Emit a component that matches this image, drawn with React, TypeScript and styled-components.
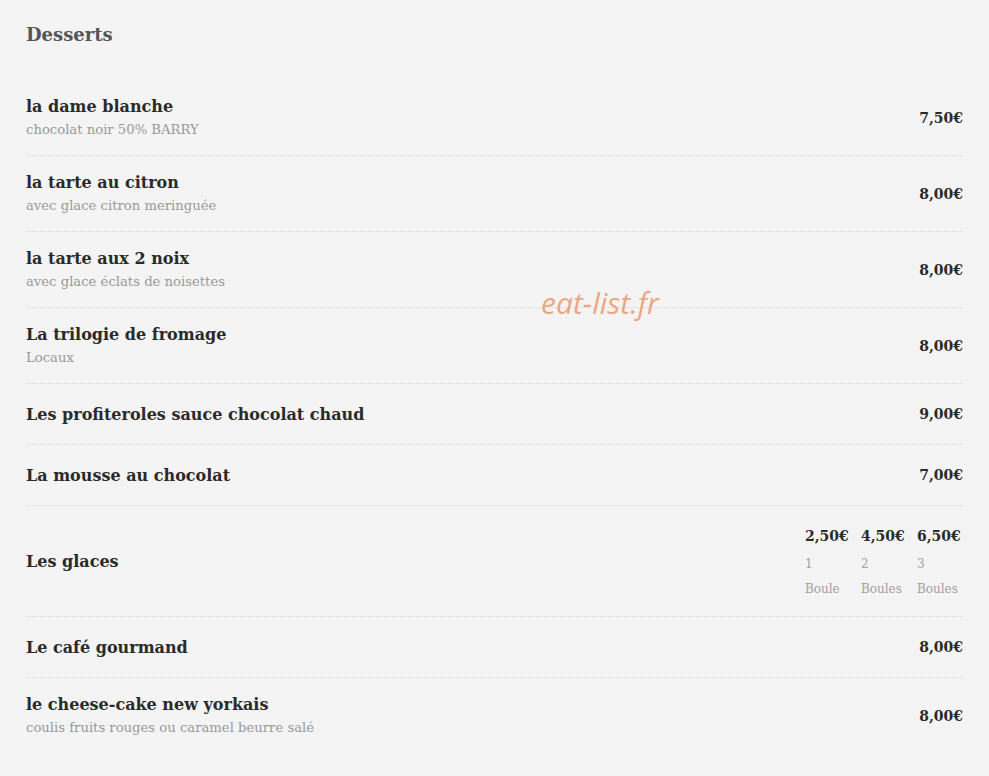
import React from "react";
import styled, { createGlobalStyle } from "styled-components";

interface Item {
  name: string;
  desc?: string;
  price?: string;
  prices?: { price: string; qty: string; label: string }[];
}

const items: Item[] = [
  { name: "la dame blanche", desc: "chocolat noir 50% BARRY", price: "7,50€" },
  { name: "la tarte au citron", desc: "avec glace citron meringuée", price: "8,00€" },
  { name: "la tarte aux 2 noix", desc: "avec glace éclats de noisettes", price: "8,00€" },
  { name: "La trilogie de fromage", desc: "Locaux", price: "8,00€" },
  { name: "Les profiteroles sauce chocolat chaud", price: "9,00€" },
  { name: "La mousse au chocolat", price: "7,00€" },
  {
    name: "Les glaces",
    prices: [
      { price: "2,50€", qty: "1", label: "Boule" },
      { price: "4,50€", qty: "2", label: "Boules" },
      { price: "6,50€", qty: "3", label: "Boules" },
    ],
  },
  { name: "Le café gourmand", price: "8,00€" },
  { name: "le cheese-cake new yorkais", desc: "coulis fruits rouges ou caramel beurre salé", price: "8,00€" },
];

const App: React.FC = () => {
  return (
    <Page>
      <GlobalStyle />
      <Heading>Desserts</Heading>
      <MenuList>
        {items.map((item, i) => (
          <Row key={i} last={i === items.length - 1}>
            <Info>
              <Name>{item.name}</Name>
              {item.desc && <Desc>{item.desc}</Desc>}
            </Info>
            {item.prices ? (
              <PriceGrid>
                {item.prices.map((p) => (
                  <PriceCol key={p.price}>
                    <Price>{p.price}</Price>
                    <SubLabel>{p.qty}</SubLabel>
                    <SubLabel>{p.label}</SubLabel>
                  </PriceCol>
                ))}
              </PriceGrid>
            ) : (
              <Price>{item.price}</Price>
            )}
          </Row>
        ))}
      </MenuList>
      <Watermark>eat-list.fr</Watermark>
    </Page>
  );
};

export default App;

const GlobalStyle = createGlobalStyle`
  html, body {
    margin: 0;
    padding: 0;
    background: #f4f4f4;
  }
`;

const Page = styled.div`
  position: relative;
  width: 989px;
  height: 776px;
  box-sizing: border-box;
  padding: 0 26px;
  background: #f4f4f4;
  font-family: "DejaVu Serif", "Liberation Serif", serif;
  overflow: hidden;
`;

const Heading = styled.h2`
  margin: 0;
  padding-top: 23px;
  height: 80px;
  box-sizing: border-box;
  font-size: 18px;
  line-height: 24px;
  font-weight: bold;
  color: #555555;
`;

const MenuList = styled.div`
  display: flex;
  flex-direction: column;
`;

const Row = styled.div<{ last?: boolean }>`
  display: flex;
  align-items: center;
  justify-content: space-between;
  padding: 15px 0 14px;
  border-bottom: ${(p) => (p.last ? "none" : "1px dotted #d6d6d6")};
`;

const Info = styled.div`
  display: flex;
  flex-direction: column;
`;

const Name = styled.div`
  font-size: 16px;
  line-height: 24px;
  font-weight: bold;
  color: #2a2a2a;
`;

const Desc = styled.div`
  font-size: 13.2px;
  line-height: 22px;
  color: #999999;
`;

const Price = styled.div`
  font-size: 14px;
  line-height: 31px;
  font-weight: bold;
  color: #2a2a2a;
`;

const PriceGrid = styled.div`
  display: flex;
  gap: 10px;
`;

const PriceCol = styled.div`
  display: flex;
  flex-direction: column;
  min-width: 46px;
`;

const SubLabel = styled.div`
  font-size: 12px;
  line-height: 25px;
  color: #a0a0a0;
`;

const Watermark = styled.div`
  position: absolute;
  left: 541px;
  top: 283px;
  font-family: "Open Sans", sans-serif;
  font-style: italic;
  font-size: 30px;
  line-height: 40px;
  color: rgba(236, 140, 88, 0.75);
  pointer-events: none;
`;
